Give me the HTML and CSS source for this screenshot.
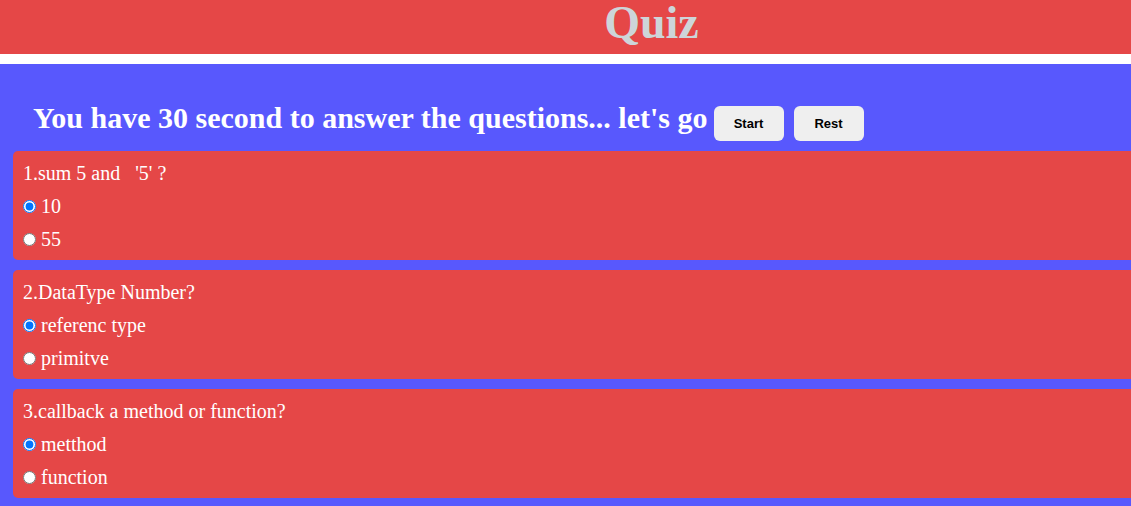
FILE: index.html
```html
<!DOCTYPE html>
<html>
<head>
<meta charset="utf-8">
<link rel="stylesheet" href="styles.css">
</head>
<body>
<header class="top">
  <h1 class="title">Quiz</h1>
</header>
<main class="main">
  <div class="intro">
    <h2 class="intro-text">You have 30 second to answer the questions... let's go</h2>
    <button class="btn">Start</button>
    <button class="btn">Rest</button>
  </div>
  <div class="cards">
    <div class="card">
      <div class="row">1.sum 5 and &nbsp; '5' ?</div>
      <label class="row"><input type="radio" name="q1" checked><span>10</span></label>
      <label class="row"><input type="radio" name="q1"><span>55</span></label>
    </div>
    <div class="card">
      <div class="row">2.DataType Number?</div>
      <label class="row"><input type="radio" name="q2" checked><span>referenc type</span></label>
      <label class="row"><input type="radio" name="q2"><span>primitve</span></label>
    </div>
    <div class="card">
      <div class="row">3.callback a method or function?</div>
      <label class="row"><input type="radio" name="q3" checked><span>metthod</span></label>
      <label class="row"><input type="radio" name="q3"><span>function</span></label>
    </div>
  </div>
</main>
</body>
</html>
```
FILE: styles.css
```css
html, body {
  margin: 0;
  padding: 0;
  overflow: hidden;
  background: #ffffff;
  font-family: "Liberation Serif", "Times New Roman", serif;
}
.top {
  background: #e54747;
  height: 54px;
  margin-bottom: 10px;
  display: flex;
  align-items: flex-start;
  justify-content: center;
  padding-left: 172px;
}
.title {
  margin: 0;
  font-size: 46px;
  font-weight: bold;
  color: #cdd5d9;
  line-height: 46px;
}
.main {
  background: #5858fd;
  padding: 30px 0 20px 13px;
  min-height: 500px;
}
.intro {
  display: flex;
  align-items: flex-start;
  padding-left: 20px;
  height: 57px;
}
.intro-text {
  margin: 7px 6px 0 0;
  font-size: 30px;
  line-height: 33px;
  font-weight: bold;
  color: #ffffff;
}
.btn {
  width: 70px;
  height: 35px;
  margin: 12px 10px 0 0;
  border: none;
  border-radius: 6px;
  background: #efefef;
  color: #000;
  font-family: "Liberation Sans", Arial, sans-serif;
  font-weight: bold;
  font-size: 13px;
  padding: 0;
}
.cards {
  display: flex;
  flex-direction: column;
  gap: 10px;
  margin-right: -30px;
}
.card {
  background: #e54747;
  border-radius: 5px;
  padding: 6px 10px 4px 10px;
  color: #ffffff;
  font-size: 20px;
}
.row {
  display: flex;
  align-items: center;
  height: 33px;
}
.row input {
  margin: 0 5px 0 0;
  width: 13px;
  height: 13px;
}
```
